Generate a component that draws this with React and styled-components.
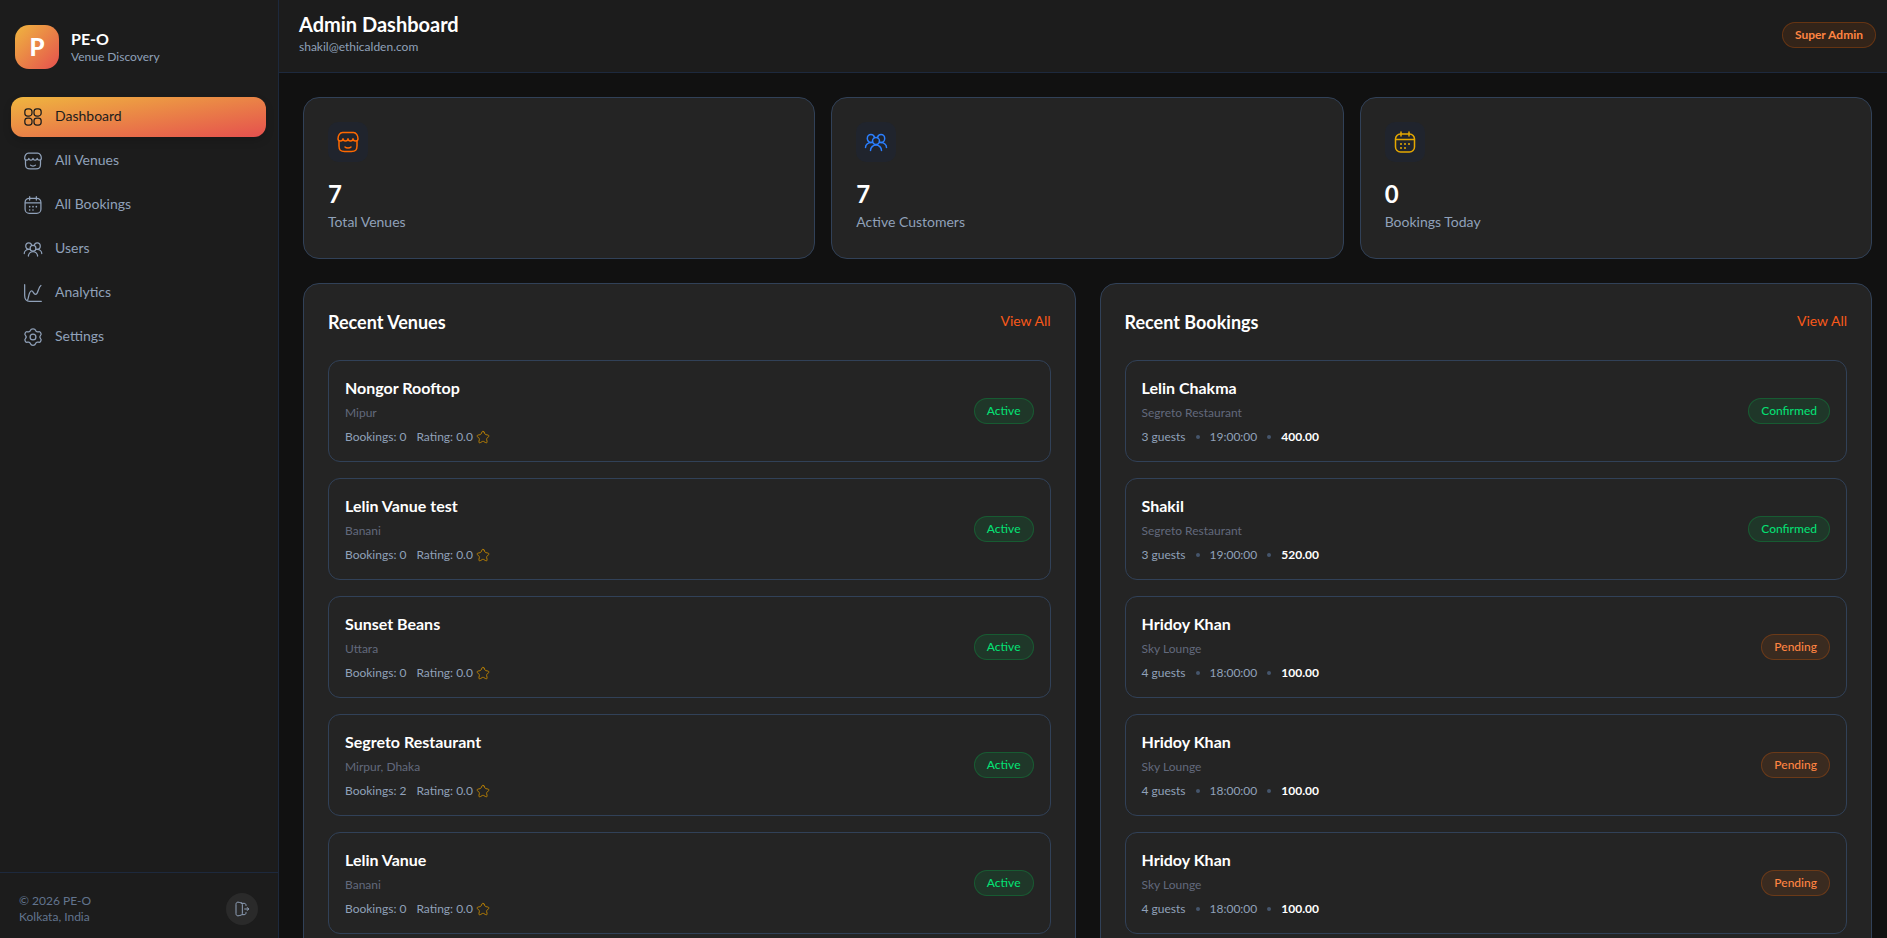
import React from "react";
import styled, { createGlobalStyle, css } from "styled-components";

const GlobalStyle = createGlobalStyle`
  * {
    box-sizing: border-box;
    margin: 0;
  }

  body {
    background: #111111;
    color: #ffffff;
    font-family: Lato, "Open Sans", sans-serif;
    font-size: 14px;
    line-height: 20px;
  }

  a {
    text-decoration: none;
  }
`;

const Svg = styled.svg`
  width: ${(props) => props.$size}px;
  height: ${(props) => props.$size}px;
  flex-shrink: 0;
  fill: none;
  stroke: currentColor;
  stroke-width: 1.5;
  stroke-linecap: round;
  stroke-linejoin: round;
`;

const Icon = ({ size = 20, children }) => (
  <Svg viewBox="0 0 24 24" $size={size} aria-hidden="true">
    {children}
  </Svg>
);

const DashboardIcon = (props) => (
  <Icon {...props}>
    <rect x="2.2" y="2.2" width="8.6" height="8.6" rx="3.4" />
    <rect x="13.2" y="2.2" width="8.6" height="8.6" rx="3.4" />
    <rect x="2.2" y="13.2" width="8.6" height="8.6" rx="3.4" />
    <rect x="13.2" y="13.2" width="8.6" height="8.6" rx="3.4" />
  </Icon>
);

const StoreIcon = (props) => (
  <Icon {...props}>
    <path d="M3 11v5c0 4.200 1.300 5.500 5.500 5.500h7c4.200 0 5.500-1.300 5.500-5.500v-5" />
    <path d="M9 17c.7.7 1.800 1 3 1s2.300-.3 3-1" />
    <path d="M6.500 2.500h11c2.500 0 4.500 3 4.500 6.200 0 1.400-1 2.300-2.500 2.300S17 10.200 17 8.800c0 1.400-1 2.200-2.500 2.200S12 10.200 12 8.800c0 1.400-1 2.200-2.500 2.200S7 10.200 7 8.800C7 10.200 6 11 4.500 11S2 10.100 2 8.700c0-3.200 2-6.200 4.500-6.200Z" />
  </Icon>
);

const CalendarIcon = (props) => (
  <Icon {...props}>
    <path d="M16 2v4M8 2v4M3 9.500h18" />
    <rect x="2.500" y="4" width="19" height="18" rx="5" />
    <path d="M12 14h.01M16 14h.01M8 14h.01M12 18h.01M8 18h.01" strokeWidth="2" />
  </Icon>
);

const UsersIcon = (props) => (
  <Icon {...props}>
    <circle cx="12" cy="11" r="3.500" />
    <path d="M17.500 20.500c0-3-2.500-5.500-5.500-5.500s-5.500 2.500-5.500 5.500" />
    <path d="M15.300 12c.5.300 1 .5 1.700.5 2 0 3.700-1.700 3.700-4S19 4.500 17 4.500c-1.700 0-3.100 1.200-3.500 3" />
    <path d="M8.700 12c-.5.300-1 .5-1.700.5-2 0-3.700-1.700-3.700-4S5 4.500 7 4.500c1.700 0 3.100 1.200 3.500 3" />
    <path d="M17 12.500c3 0 5.500 2.200 5.500 5M7 12.500c-3 0-5.500 2.200-5.500 5" />
  </Icon>
);

const ChartIcon = (props) => (
  <Icon {...props}>
    <path d="M2 2v13c0 5 1.500 7 6 7h14" />
    <path d="M5.500 20.500c1.200-2 1.400-11 4.800-11 2.300 0 2.200 4.200 4.700 4.200C18.500 13.700 18 5 21.500 3" />
  </Icon>
);

const SettingsIcon = (props) => (
  <Icon {...props}>
    <circle cx="12" cy="12" r="3.500" />
    <path d="M21.300 7.100c.8 1.300.8 2-.2 3-1.100 1.100-1.100 2.700 0 3.800 1 1 1 1.700.2 3-.8 1.400-1.400 1.700-2.700 1.300-1.700-.4-3.100.3-3.600 1.900-.4 1.400-1 1.800-3 1.800s-2.600-.4-3-1.800c-.5-1.600-1.900-2.300-3.600-1.900-1.300.4-1.900.1-2.700-1.300-.8-1.300-.8-2 .2-3 1.100-1.100 1.100-2.700 0-3.800-1-1-1-1.700-.2-3 .8-1.400 1.400-1.700 2.700-1.300 1.700.4 3.100-.3 3.600-1.900.4-1.400 1-1.800 3-1.800s2.600.4 3 1.800c.5 1.600 1.900 2.300 3.600 1.900 1.300-.4 1.900-.1 2.700 1.300Z" />
  </Icon>
);

const LogoutIcon = (props) => (
  <Icon {...props}>
    <path d="M11 3 7.800 2C4.800 1.100 3 2.300 3 5v14c0 2.700 1.800 3.900 4.800 3L11 21c1-.4 1.500-1 1.500-2.500v-13C12.500 4 12 3.400 11 3Z" />
    <path d="M12.500 3.500H15c2 0 3 1 3 3V7M12.500 20.500H15c2 0 3-1 3-3V17" />
    <path d="M16 12h6M20 9.800l2 2.200-2 2.200" />
  </Icon>
);

const StarIcon = (props) => (
  <Icon {...props}>
    <path d="m13.700 3.400 1.800 3.600c.3.500.9.900 1.500 1l3.200.6c2 .3 2.500 1.800 1 3.200l-2.500 2.600c-.4.400-.7 1.200-.5 1.800l.7 3.100c.6 2.500-.7 3.400-2.900 2.100l-3-1.800c-.5-.3-1.500-.3-2 0l-3 1.800c-2.200 1.300-3.500.4-2.900-2.100l.7-3.100c.1-.6-.1-1.400-.5-1.800l-2.500-2.600c-1.500-1.400-1-2.900 1-3.200L7 8c.6-.1 1.200-.5 1.500-1l1.800-3.600c.9-1.900 2.500-1.900 3.400 0Z" />
  </Icon>
);

const Layout = styled.div`
  display: flex;
  height: 100vh;
  overflow: hidden;
`;

const brandGradient = css`
  background: linear-gradient(to bottom right, #efb63f, #e5504e);
`;

const Sidebar = styled.aside`
  display: flex;
  flex-direction: column;
  flex-shrink: 0;
  width: 279px;
  background: #1c1c1c;
  border-right: 1px solid #1d293d;
`;

const Brand = styled.div`
  display: flex;
  align-items: center;
  gap: 12px;
  padding: 25px 15px 28px;
`;

const Logo = styled.div`
  ${brandGradient}
  display: flex;
  align-items: center;
  justify-content: center;
  width: 44px;
  height: 44px;
  border-radius: 14px;
  font-size: 24px;
  font-weight: 900;
`;

const BrandName = styled.p`
  font-size: 16px;
  font-weight: 700;
`;

const BrandText = styled.p`
  color: #90a1b9;
  font-size: 12px;
  line-height: 16px;
`;

const Nav = styled.nav`
  display: flex;
  flex: 1;
  flex-direction: column;
  gap: 4px;
  padding: 0 12px 0 11px;
`;

const NavItem = styled.a`
  display: flex;
  align-items: center;
  gap: 12px;
  height: 40px;
  padding: 0 12px;
  border-radius: 12px;
  color: #90a1b9;

  span {
    padding-bottom: 2px;
  }

  ${(props) =>
    props.$active &&
    css`
      ${brandGradient}
      color: #1c1c1c;
      box-shadow: 0 4px 8px rgba(0, 0, 0, 0.15);
    `}
`;

const SidebarFooter = styled.footer`
  display: flex;
  align-items: center;
  justify-content: space-between;
  padding: 20px 20px 13px 19px;
  border-top: 1px solid #1d293d;
  color: #62748e;
  font-size: 12px;
  line-height: 16px;
`;

const LogoutButton = styled.button`
  display: flex;
  align-items: center;
  justify-content: center;
  width: 32px;
  height: 32px;
  padding: 0;
  border: 0;
  border-radius: 50%;
  background: #2a2a2a;
  color: #90a1b9;
  cursor: pointer;
`;

const Main = styled.div`
  display: flex;
  flex: 1;
  flex-direction: column;
  min-width: 0;
`;

const Header = styled.header`
  display: flex;
  flex-shrink: 0;
  align-items: center;
  justify-content: space-between;
  padding: 10px 11px 12px 20px;
  background: #1c1c1c;
  border-bottom: 1px solid #1d293d;
`;

const HeaderText = styled.div`
  padding-bottom: 4px;
`;

const PageTitle = styled.h1`
  font-size: 20px;
  font-weight: 700;
  line-height: 28px;
`;

const Email = styled.p`
  color: #90a1b9;
  font-size: 12px;
  line-height: 18px;
`;

const tones = {
  green: ["#05df72", "rgba(0, 201, 80, 0.12)", "rgba(0, 201, 80, 0.25)"],
  orange: ["#ff8442", "rgba(255, 105, 0, 0.1)", "rgba(255, 105, 0, 0.25)"],
};

const Badge = styled.span`
  flex-shrink: 0;
  padding: 4px 12px;
  border: 1px solid ${(props) => tones[props.$tone][2]};
  border-radius: 13px;
  background: ${(props) => tones[props.$tone][1]};
  color: ${(props) => tones[props.$tone][0]};
  font-size: 12px;
  font-weight: ${(props) => (props.$bold ? 700 : 500)};
  line-height: 16px;
`;

const Content = styled.main`
  display: flex;
  flex: 1;
  flex-direction: column;
  gap: 24px;
  padding: 24px 15px 24px 24px;
  overflow: hidden;
`;

const Stats = styled.section`
  display: grid;
  grid-template-columns: repeat(3, 1fr);
  gap: 16px;
`;

const Card = styled.div`
  padding: 24px;
  border: 1px solid #314158;
  border-radius: 16px;
  background: #242424;
`;

const StatIcon = styled.div`
  display: flex;
  align-items: center;
  justify-content: center;
  width: 40px;
  height: 40px;
  margin-bottom: 16px;
  border-radius: 10px;
  background: #20242d;
  color: ${(props) => props.$color};
`;

const StatValue = styled.p`
  margin-bottom: 2px;
  font-size: 24px;
  font-weight: 700;
  line-height: 32px;
`;

const StatLabel = styled.p`
  padding-bottom: 2px;
  color: #90a1b9;
`;

const Panels = styled.section`
  display: grid;
  grid-template-columns: repeat(2, 1fr);
  gap: 24px;
`;

const PanelHeader = styled.div`
  display: flex;
  align-items: center;
  justify-content: space-between;
  margin-bottom: 24px;
`;

const PanelTitle = styled.h2`
  font-size: 18px;
  font-weight: 700;
  line-height: 28px;
`;

const ViewAll = styled.a`
  padding-bottom: 2px;
  color: #f9591a;
`;

const List = styled.ul`
  display: flex;
  flex-direction: column;
  gap: 16px;
  padding: 0;
  list-style: none;
`;

const Row = styled.li`
  display: flex;
  align-items: center;
  justify-content: space-between;
  padding: 16px;
  border: 1px solid #314158;
  border-radius: 12px;
`;

const RowTitle = styled.h3`
  padding-bottom: 6px;
  font-size: 16px;
  font-weight: 700;
  line-height: 22px;
`;

const RowSubtitle = styled.p`
  margin-bottom: 8px;
  color: #62697c;
  font-size: 12px;
  line-height: 16px;
`;

const Meta = styled.div`
  display: flex;
  align-items: center;
  gap: 10px;
  color: #90a1b9;
  font-size: 12px;
  line-height: 16px;
`;

const Rating = styled.span`
  display: flex;
  align-items: center;
  gap: 3px;

  svg {
    color: #c98a00;
  }
`;

const Dot = styled.span`
  width: 4px;
  height: 4px;
  border-radius: 50%;
  background: #45556c;
`;

const Amount = styled.span`
  color: #ffffff;
  font-weight: 700;
`;

const navItems = [
  { label: "Dashboard", icon: DashboardIcon, active: true },
  { label: "All Venues", icon: StoreIcon },
  { label: "All Bookings", icon: CalendarIcon },
  { label: "Users", icon: UsersIcon },
  { label: "Analytics", icon: ChartIcon },
  { label: "Settings", icon: SettingsIcon },
];

const stats = [
  { label: "Total Venues", value: 7, icon: StoreIcon, color: "#ff6900" },
  { label: "Active Customers", value: 7, icon: UsersIcon, color: "#2b7fff" },
  { label: "Bookings Today", value: 0, icon: CalendarIcon, color: "#e5a800" },
];

const venues = [
  { name: "Nongor Rooftop", area: "Mipur", bookings: 0 },
  { name: "Lelin Vanue test", area: "Banani", bookings: 0 },
  { name: "Sunset Beans", area: "Uttara", bookings: 0 },
  { name: "Segreto Restaurant", area: "Mirpur, Dhaka", bookings: 2 },
  { name: "Lelin Vanue", area: "Banani", bookings: 0 },
];

const bookings = [
  { name: "Lelin Chakma", venue: "Segreto Restaurant", guests: 3, time: "19:00:00", amount: "400.00", status: "Confirmed" },
  { name: "Shakil", venue: "Segreto Restaurant", guests: 3, time: "19:00:00", amount: "520.00", status: "Confirmed" },
  { name: "Hridoy Khan", venue: "Sky Lounge", guests: 4, time: "18:00:00", amount: "100.00", status: "Pending" },
  { name: "Hridoy Khan", venue: "Sky Lounge", guests: 4, time: "18:00:00", amount: "100.00", status: "Pending" },
  { name: "Hridoy Khan", venue: "Sky Lounge", guests: 4, time: "18:00:00", amount: "100.00", status: "Pending" },
];

const Panel = ({ title, children }) => (
  <Card>
    <PanelHeader>
      <PanelTitle>{title}</PanelTitle>
      <ViewAll href="#">View All</ViewAll>
    </PanelHeader>
    <List>{children}</List>
  </Card>
);

const App = () => {
  return (
    <Layout>
      <GlobalStyle />
      <Sidebar>
        <Brand>
          <Logo>P</Logo>
          <div>
            <BrandName>PE-O</BrandName>
            <BrandText>Venue Discovery</BrandText>
          </div>
        </Brand>
        <Nav>
          {navItems.map(({ label, icon: ItemIcon, active }) => (
            <NavItem key={label} href="#" $active={active}>
              <ItemIcon size={20} />
              <span>{label}</span>
            </NavItem>
          ))}
        </Nav>
        <SidebarFooter>
          <div>
            <p>© 2026 PE-O</p>
            <p>Kolkata, India</p>
          </div>
          <LogoutButton type="button" aria-label="Log out">
            <LogoutIcon size={16} />
          </LogoutButton>
        </SidebarFooter>
      </Sidebar>

      <Main>
        <Header>
          <HeaderText>
            <PageTitle>Admin Dashboard</PageTitle>
            <Email>shakil@ethicalden.com</Email>
          </HeaderText>
          <Badge $tone="orange" $bold>Super Admin</Badge>
        </Header>

        <Content>
          <Stats>
            {stats.map(({ label, value, icon: ItemIcon, color }) => (
              <Card key={label}>
                <StatIcon $color={color}>
                  <ItemIcon size={24} />
                </StatIcon>
                <StatValue>{value}</StatValue>
                <StatLabel>{label}</StatLabel>
              </Card>
            ))}
          </Stats>

          <Panels>
            <Panel title="Recent Venues">
              {venues.map((venue) => (
                <Row key={venue.name}>
                  <div>
                    <RowTitle>{venue.name}</RowTitle>
                    <RowSubtitle>{venue.area}</RowSubtitle>
                    <Meta>
                      <span>Bookings: {venue.bookings}</span>
                      <Rating>
                        Rating: 0.0 <StarIcon size={14} />
                      </Rating>
                    </Meta>
                  </div>
                  <Badge $tone="green">Active</Badge>
                </Row>
              ))}
            </Panel>

            <Panel title="Recent Bookings">
              {bookings.map((booking, i) => (
                <Row key={i}>
                  <div>
                    <RowTitle>{booking.name}</RowTitle>
                    <RowSubtitle>{booking.venue}</RowSubtitle>
                    <Meta>
                      <span>{booking.guests} guests</span>
                      <Dot />
                      <span>{booking.time}</span>
                      <Dot />
                      <Amount>{booking.amount}</Amount>
                    </Meta>
                  </div>
                  <Badge $tone={booking.status === "Confirmed" ? "green" : "orange"}>{booking.status}</Badge>
                </Row>
              ))}
            </Panel>
          </Panels>
        </Content>
      </Main>
    </Layout>
  );
};

export default App;
